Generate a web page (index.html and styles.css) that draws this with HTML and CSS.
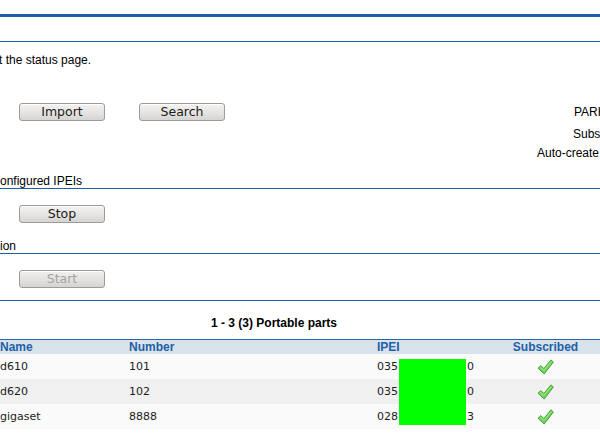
FILE: index.html
```html
<!DOCTYPE html>
<html>
<head>
<meta charset="utf-8">
<link rel="stylesheet" href="styles.css">
</head>
<body>
<div class="page">
  <div class="rule-thick"></div>
  <div class="rule rule-top"></div>
  <section class="general">
    <p class="note">t the status page.</p>
    <div class="actions">
      <button class="btn">Import</button>
      <button class="btn">Search</button>
    </div>
    <div class="labels">
      <div class="lbl lbl-pari">PARK</div>
      <div class="lbl lbl-subs">Subscription</div>
      <div class="lbl lbl-auto">Auto-create IPEI</div>
    </div>
  </section>
  <div class="sec-title sec-first">onfigured IPEIs</div>
  <div class="rule"></div>
  <div class="btn-row"><button class="btn">Stop</button></div>
  <div class="sec-title">ion</div>
  <div class="rule"></div>
  <div class="btn-row"><button class="btn" disabled>Start</button></div>
  <div class="rule rule-list"></div>
  <div class="list-title">1 - 3 (3) Portable parts</div>
  <div class="parts">
    <table class="grid">
      <colgroup>
        <col class="c-name"><col class="c-num"><col class="c-ipei"><col class="c-sub">
      </colgroup>
      <thead>
        <tr><th>Name</th><th>Number</th><th>IPEI</th><th class="center">Subscribed</th></tr>
      </thead>
      <tbody>
        <tr class="odd"><td>d610</td><td>101</td><td>035<span class="gap"></span>0</td><td class="center"><svg class="check" viewBox="0 0 17 16" width="17" height="16"><path d="M1 9.2 L3.9 6.6 L6.9 9.6 L13.9 0.9 L16.4 3 L7.2 15 Z" fill="#74d25e" stroke="#46a535" stroke-width="1" stroke-linejoin="round"/><path d="M3 8.3 L6.9 11.4 L14.4 2.4" fill="none" stroke="#a3e891" stroke-width="1"/></svg></td></tr>
        <tr class="even"><td>d620</td><td>102</td><td>035<span class="gap"></span>0</td><td class="center"><svg class="check" viewBox="0 0 17 16" width="17" height="16"><path d="M1 9.2 L3.9 6.6 L6.9 9.6 L13.9 0.9 L16.4 3 L7.2 15 Z" fill="#74d25e" stroke="#46a535" stroke-width="1" stroke-linejoin="round"/><path d="M3 8.3 L6.9 11.4 L14.4 2.4" fill="none" stroke="#a3e891" stroke-width="1"/></svg></td></tr>
        <tr class="odd"><td>gigaset</td><td>8888</td><td>028<span class="gap"></span>3</td><td class="center"><svg class="check" viewBox="0 0 17 16" width="17" height="16"><path d="M1 9.2 L3.9 6.6 L6.9 9.6 L13.9 0.9 L16.4 3 L7.2 15 Z" fill="#74d25e" stroke="#46a535" stroke-width="1" stroke-linejoin="round"/><path d="M3 8.3 L6.9 11.4 L14.4 2.4" fill="none" stroke="#a3e891" stroke-width="1"/></svg></td></tr>
      </tbody>
    </table>
    <div class="redact"></div>
  </div>
</div>
</body>
</html>
```
FILE: styles.css
```css
* { box-sizing: border-box; }
html, body { margin: 0; padding: 0; background: #fff; }
body {
  width: 600px;
  height: 436px;
  overflow: hidden;
  font-family: "Liberation Sans", Arial, sans-serif;
  font-size: 12px;
  color: #000;
}
.page { width: 600px; padding-top: 14px; }
.rule-thick { height: 3px; background: #1a5ea9; }
.rule { height: 1px; background: #1e5ca3; }
.rule-top { margin-top: 24px; }

.general {
  display: grid;
  grid-template-columns: 537px 63px;
  row-gap: 36px;
  padding-top: 11px;
}
.note {
  grid-column: 1 / 3;
  margin: 0 0 0 -1px;
  line-height: 14px;
  white-space: nowrap;
}
.actions {
  display: flex;
  gap: 34px;
  padding-left: 19px;
  align-items: flex-start;
}
.labels {
  display: flex;
  flex-direction: column;
  line-height: 18px;
  white-space: nowrap;
}
.lbl-pari { padding-left: 37px; }
.lbl-subs { padding-left: 36px; margin-top: 4px; }
.lbl-auto { margin-top: 1px; }

.btn {
  width: 86px;
  height: 18px;
  padding: 0;
  margin: 0;
  border: 1px solid #9d9b98;
  border-radius: 3px;
  background: linear-gradient(#f4f3f2, #e4e2e0 60%, #d6d4d1);
  box-shadow: inset 0 1px 0 #fff;
  font-family: "DejaVu Sans", sans-serif;
  font-size: 12.5px;
  line-height: 16px;
  color: #1a1a1a;
}
.btn:disabled { color: #a3a3a3; background: linear-gradient(#f1f0ef, #e2e0de 60%, #d6d4d1); }

.sec-title {
  margin-top: 16px;
  line-height: 14px;
  white-space: nowrap;
}
.sec-first { margin-top: 12px; }
.btn-row { padding: 16px 0 0 19px; display: flex; }
.rule-list { margin-top: 12px; }

.list-title {
  margin-top: 15px;
  width: 548px;
  text-align: center;
  font-weight: bold;
  line-height: 14px;
}

.parts {
  position: relative;
  margin-top: 9px;
  border-top: 1px solid #2b64a7;
}
.grid {
  width: 600px;
  border-collapse: collapse;
  table-layout: fixed;
}
.c-name { width: 129px; }
.c-num { width: 248px; }
.c-ipei { width: 114px; }
.c-sub { width: 109px; }
.grid th {
  height: 14px;
  padding: 0;
  text-align: left;
  background: #d9e3eb;
  color: #1e5fa9;
  font-weight: bold;
  font-size: 12px;
  line-height: 14px;
}
.grid td {
  height: 25px;
  padding: 0;
  font-family: "DejaVu Sans", sans-serif;
  font-size: 11px;
  color: #1c1c1c;
  vertical-align: middle;
  white-space: nowrap;
}
.grid .center { text-align: center; }
.odd td { background: #fafafa; }
.even td { background: #f0f0f0; }
.gap { display: inline-block; width: 69px; }
.check { display: block; margin: 1px auto 0; }
.redact {
  position: absolute;
  left: 399px;
  top: 19px;
  width: 67px;
  height: 66px;
  background: #00ff00;
}
```
